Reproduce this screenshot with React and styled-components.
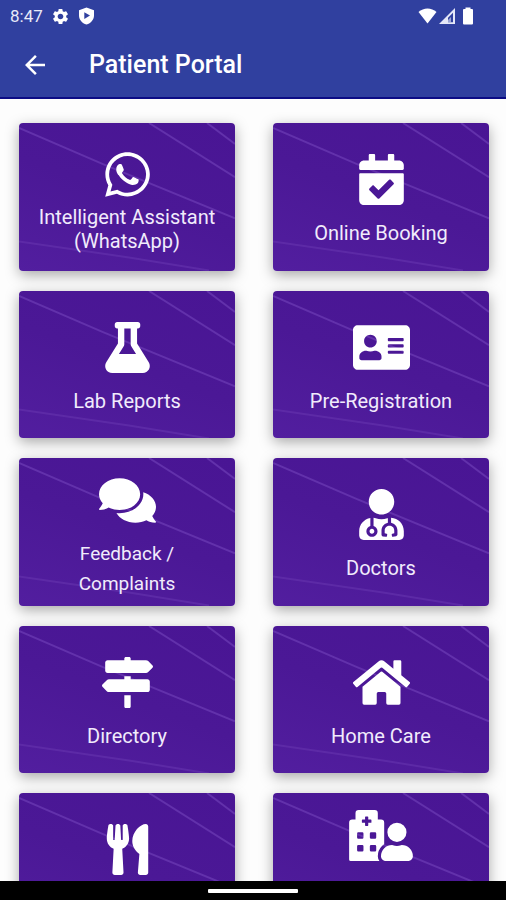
import React from "react";
import styled, { createGlobalStyle } from "styled-components";
import {
  FaAddressCard,
  FaCalendarCheck,
  FaComments,
  FaFlask,
  FaHome,
  FaHospitalUser,
  FaMapSigns,
  FaUserMd,
  FaUtensils,
  FaWhatsapp,
} from "react-icons/fa";
import { MdArrowBack, MdSettings } from "react-icons/md";

const GlobalStyle = createGlobalStyle`
  * {
    box-sizing: border-box;
  }
  body {
    margin: 0;
    background: #fdfdfd;
    font-family: Roboto, "Liberation Sans", sans-serif;
  }
`;

const Container = styled.div`
  height: 100vh;
  display: flex;
  flex-direction: column;
`;

const Header = styled.header`
  flex: none;
  color: #fff;
  background: #30409f;
  border-bottom: 2px solid #0c0c85;
`;

const StatusBar = styled.div`
  height: 32px;
  padding: 0 32px 0 10px;
  display: flex;
  align-items: center;
  justify-content: space-between;
`;

const StatusGroup = styled.div`
  display: flex;
  align-items: center;
  gap: ${(props) => props.$gap}px;
`;

const Time = styled.span`
  font-size: 17px;
  line-height: 20px;
  color: #e8eaf8;
`;

const AppBar = styled.div`
  height: 65px;
  padding: 1px 20px 0;
  display: flex;
  align-items: center;
  gap: 39px;

  h1 {
    margin: 0;
    font-size: 25px;
    line-height: 30px;
    font-weight: 500;
  }
`;

const BackBtn = styled.button`
  display: flex;
  padding: 0;
  border: none;
  background: none;
  color: inherit;
  font-size: 30px;
  cursor: pointer;
`;

const Content = styled.main`
  flex: 1;
  min-height: 0;
  overflow-y: auto;
  scrollbar-width: none;
`;

const Menu = styled.nav`
  display: grid;
  grid-template-columns: 1fr 1fr;
  gap: 20px 38px;
  padding: 24px 17px 24px 19px;
`;

const Card = styled.a`
  position: relative;
  aspect-ratio: 41 / 28;
  padding-top: ${(props) => (props.$narrow ? 11 : 9)}px;
  display: flex;
  flex-direction: column;
  align-items: center;
  justify-content: center;
  gap: ${(props) => (props.$compact ? 5 : 13)}px;
  overflow: hidden;
  border-radius: 4px;
  background: linear-gradient(20deg, #521e9f, #4b1896 50%, #491594);
  box-shadow: 0 4px 14px rgba(0, 0, 0, 0.34);
  color: #fff;
  text-decoration: none;
`;

const Backdrop = styled.svg`
  position: absolute;
  inset: 0;
  width: 100%;
  height: 100%;
  fill: none;
  stroke: #6231ab;
  stroke-width: 2;
`;

const CardIcon = styled.span`
  position: relative;
  display: flex;

  svg {
    width: ${(props) => props.$width}px;
    height: 51px;
  }
`;

const Label = styled.span`
  position: relative;
  max-width: ${(props) => (props.$narrow ? 110 : 190)}px;
  min-height: ${(props) => (props.$narrow ? 60 : 30)}px;
  font-size: ${(props) => (props.$narrow ? 19 : 20)}px;
  line-height: ${(props) => (props.$compact ? 24 : 30)}px;
  text-align: center;
  color: #f1ebfc;
`;

const NavBar = styled.footer`
  flex: none;
  height: 19px;
  display: flex;
  align-items: center;
  justify-content: center;
  background: #000;

  span {
    width: 90px;
    height: 4px;
    border-radius: 1px;
    background: #fff;
  }
`;

const items = [
  { icon: FaWhatsapp, label: "Intelligent Assistant (WhatsApp)", compact: true },
  { icon: FaCalendarCheck, label: "Online Booking" },
  { icon: FaFlask, label: "Lab Reports" },
  { icon: FaAddressCard, label: "Pre-Registration", width: 57 },
  { icon: FaComments, label: "Feedback / Complaints", width: 57, narrow: true },
  { icon: FaUserMd, label: "Doctors" },
  { icon: FaMapSigns, label: "Directory" },
  { icon: FaHome, label: "Home Care", width: 57 },
  { icon: FaUtensils, name: "Dining" },
  { icon: FaHospitalUser, name: "Visitors", width: 64, narrow: true },
];

const ShieldPlay = () => (
  <svg width="17" height="18" viewBox="0 0 17 18" aria-hidden="true">
    <path
      fill="#fff"
      fillRule="evenodd"
      d="M8.500 0.500 L16 3.200 V8.500 C16 12.700 13 16.200 8.500 17.500 C4 16.200 1 12.700 1 8.500 V3.200 Z M6.300 5.200 V12 L12 8.600 Z"
    />
  </svg>
);

const Wifi = () => (
  <svg width="19" height="18" viewBox="0 0 19 18" aria-hidden="true">
    <path fill="#fff" d="M0.500 5 C5.500 0.200 13.500 0.200 18.500 5 L9.500 16.500 Z" />
  </svg>
);

const Signal = () => (
  <svg width="16" height="18" viewBox="0 0 16 18" aria-hidden="true">
    <path
      fill="#e4e7f8"
      fillRule="evenodd"
      d="M0 17 L16 1 V17 Z M14 5.800 L9 10.800 V15.200 H14 Z"
    />
    <path fill="#9aa4d6" d="M9 13 L12 10 V15 H9 Z" />
  </svg>
);

const Battery = () => (
  <svg width="12" height="18" viewBox="0 0 12 18" aria-hidden="true">
    <path
      fill="#fff"
      d="M3.500 0.500 H8.500 V2 H10 Q11 2 11 3 V16.500 Q11 17.500 10 17.500 H2 Q1 17.500 1 16.500 V3 Q1 2 2 2 H3.500 Z"
    />
  </svg>
);

const MenuCard = ({ icon: Icon, label, name, width = 51, compact, narrow }) => {
  return (
    <Card href="#" aria-label={name} $compact={compact} $narrow={narrow}>
      <Backdrop viewBox="0 0 216 147" preserveAspectRatio="none" aria-hidden="true">
        <path d="M0 5 L84 41 L216 95" />
        <path d="M130 0 L216 54" />
        <path d="M188 0 L216 21" />
        <path d="M0 118 L110 134 L190 147" opacity="0.7" />
      </Backdrop>
      <CardIcon $width={width}>
        <Icon aria-hidden="true" />
      </CardIcon>
      <Label $compact={compact} $narrow={narrow}>
        {label}
      </Label>
    </Card>
  );
};

const App = () => {
  return (
    <Container>
      <GlobalStyle />
      <Header>
        <StatusBar>
          <StatusGroup $gap={8}>
            <Time>8:47</Time>
            <MdSettings size={19} />
            <ShieldPlay />
          </StatusGroup>
          <StatusGroup $gap={2}>
            <Wifi />
            <StatusGroup $gap={7}>
              <Signal />
              <Battery />
            </StatusGroup>
          </StatusGroup>
        </StatusBar>
        <AppBar>
          <BackBtn aria-label="Back">
            <MdArrowBack />
          </BackBtn>
          <h1>Patient Portal</h1>
        </AppBar>
      </Header>
      <Content>
        <Menu>
          {items.map((item) => (
            <MenuCard key={item.label || item.name} {...item} />
          ))}
        </Menu>
      </Content>
      <NavBar>
        <span />
      </NavBar>
    </Container>
  );
};

export default App;
